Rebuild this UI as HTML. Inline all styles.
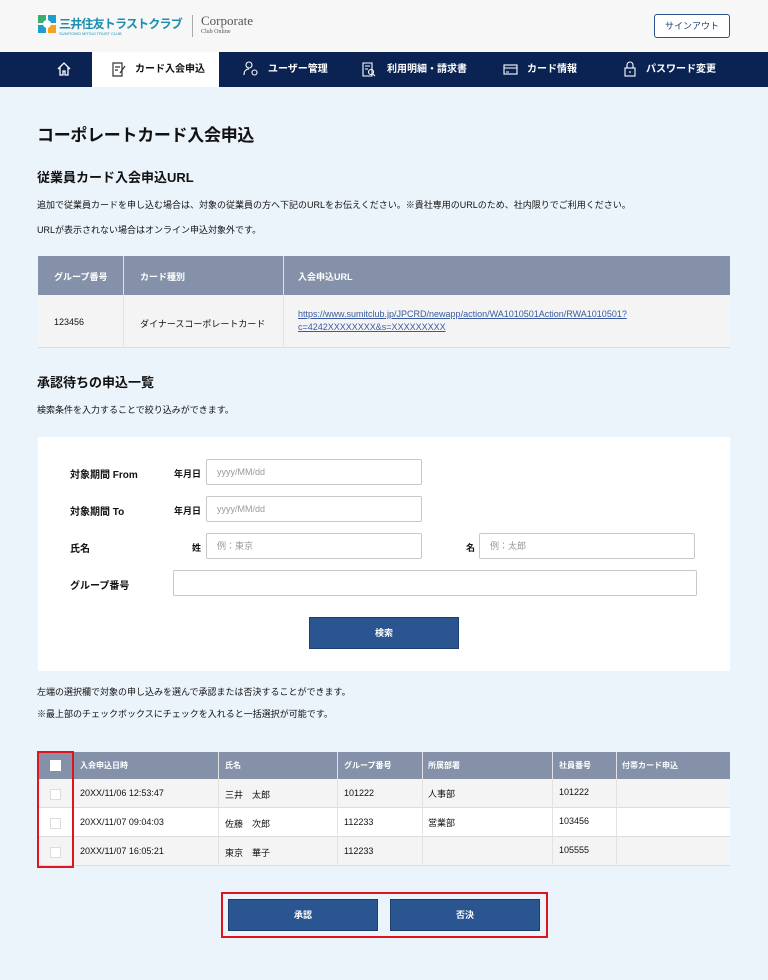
<!DOCTYPE html>
<html><head><meta charset="utf-8"><style>
*{margin:0;padding:0;box-sizing:border-box}
body{width:768px;height:980px;background:#ebf3fb;font-family:"Liberation Sans","Noto Sans CJK JP",sans-serif;color:#111;position:relative;overflow:hidden}
.a{position:absolute}
.hdr{left:0;top:0;width:768px;height:52px;background:#f7f7f7}
.nav{left:0;top:52px;width:768px;height:35px;background:#0b2352}
.nav span{position:absolute;top:0;height:35px;line-height:35px;color:#fff;font-size:10px;font-weight:bold}
.t{font-size:10px;white-space:nowrap}
.b{font-weight:bold}
.cell{position:absolute;font-size:9px;white-space:nowrap}
.inp{position:absolute;background:#fff;border:1px solid #c8c8c8;border-radius:2px;height:26px;font-size:9px;color:#999;padding:0 10px;line-height:24px}
.btn{position:absolute;background:#2b5590;border:1px solid #1d3f70;color:#fff;font-size:9px;font-weight:bold;text-align:center}
.cb{position:absolute;width:11px;height:11px;background:#fff;border:1px solid #ddd;left:50px}
</style></head><body>
<div class="a hdr"></div>
<svg class="a" style="left:38px;top:15px" width="18" height="18" viewBox="0 0 18 18"><rect x="0" y="0" width="8" height="8" fill="#3cae6b"/><rect x="10" y="0" width="8" height="8" fill="#1c9fd0"/><rect x="0" y="10" width="8" height="8" fill="#1c9fd0"/><rect x="10" y="10" width="8" height="8" fill="#f3a31c"/><circle cx="9" cy="9" r="4" fill="#fff"/></svg>
<div class="a b" style="left:59px;top:15px;font-size:12px;color:#1b8fb0;letter-spacing:-0.8px">三井住友トラストクラブ</div>
<div class="a" style="left:59px;top:31px;font-size:4px;color:#1b8fb0">SUMITOMO MITSUI TRUST CLUB</div>
<div class="a" style="left:192px;top:15px;width:1px;height:22px;background:#aaa"></div>
<div class="a" style="left:201px;top:13px;font-family:'Liberation Serif',serif;font-size:13px;color:#555">Corporate</div>
<div class="a" style="left:201px;top:29px;font-family:'Liberation Serif',serif;font-size:6px;color:#555">Club Online</div>
<div class="a" style="left:654px;top:14px;width:76px;height:24px;background:#fff;border:1px solid #2b5590;border-radius:3px;font-size:9px;color:#1d3f70;text-align:center;line-height:22px">サインアウト</div>
<div class="a nav">
<svg class="a" style="left:57px;top:10px" width="14" height="14" viewBox="0 0 14 14" fill="none" stroke="#fff" stroke-width="1.3"><path d="M1 7L7 1l6 6M3 5.5V13h3V9h2v4h3V5.5"/></svg>
<div class="a" style="left:92px;top:0;width:127px;height:35px;background:#fff"></div>
<svg class="a" style="left:112px;top:10px" width="14" height="15" viewBox="0 0 14 15" fill="none" stroke="#333" stroke-width="1.2"><path d="M1 1h9v13H1zM3 5h5M3 8h3M13 4l-5 7"/></svg>
<span style="left:135px;color:#111">カード入会申込</span>
<svg class="a" style="left:243px;top:9px" width="16" height="16" viewBox="0 0 16 16" fill="none" stroke="#fff" stroke-width="1.1"><circle cx="6" cy="4" r="3"/><path d="M1 14c0-4 2-6 5-6"/><circle cx="11.5" cy="11.5" r="2.5"/></svg>
<span style="left:268px">ユーザー管理</span>
<svg class="a" style="left:362px;top:10px" width="14" height="15" viewBox="0 0 14 15" fill="none" stroke="#fff" stroke-width="1.1"><path d="M1 1h9v13H1zM3 4h5M3 7h3"/><circle cx="9" cy="10" r="2.5"/><path d="M11 12l2 2"/></svg>
<span style="left:387px">利用明細・請求書</span>
<svg class="a" style="left:503px;top:12px" width="15" height="11" viewBox="0 0 15 11" fill="none" stroke="#fff" stroke-width="1.1"><rect x="1" y="1" width="13" height="9"/><path d="M1 4h13M3 8h3"/></svg>
<span style="left:527px">カード情報</span>
<svg class="a" style="left:624px;top:9px" width="12" height="16" viewBox="0 0 12 16" fill="none" stroke="#fff" stroke-width="1.1"><path d="M3 7V4a3 3 0 016 0v3"/><rect x="1" y="7" width="10" height="8"/><path d="M6 10v2"/></svg>
<span style="left:646px">パスワード変更</span>
</div>
<div class="a b" style="left:37px;top:121px;font-size:17px;letter-spacing:-0.3px">コーポレートカード入会申込</div>
<div class="a b" style="left:37px;top:167px;font-size:13px">従業員カード入会申込URL</div>
<div class="a t" style="left:37px;top:198px;font-size:9px">追加で従業員カードを申し込む場合は、対象の従業員の方へ下記のURLをお伝えください。※貴社専用のURLのため、社内限りでご利用ください。</div>
<div class="a t" style="left:37px;top:223px;font-size:9px">URLが表示されない場合はオンライン申込対象外です。</div>
<div class="a" style="left:38px;top:256px;width:692px;height:39px;background:#8591a8"></div>
<div class="a" style="left:38px;top:295px;width:692px;height:53px;background:#f4f4f4;border-bottom:1px solid #ddd"></div>
<div class="a" style="left:123px;top:256px;width:1px;height:92px;background:#e2e2e2"></div>
<div class="a" style="left:283px;top:256px;width:1px;height:92px;background:#e2e2e2"></div>
<div class="cell b" style="left:54px;top:270px;color:#fff">グループ番号</div>
<div class="cell b" style="left:140px;top:270px;color:#fff">カード種別</div>
<div class="cell b" style="left:298px;top:270px;color:#fff">入会申込URL</div>
<div class="cell" style="left:54px;top:317px">123456</div>
<div class="cell" style="left:140px;top:317px">ダイナースコーポレートカード</div>
<div class="cell" style="left:298px;top:308px;color:#3a5aa0;text-decoration:underline;line-height:13px">https://www.sumitclub.jp/JPCRD/newapp/action/WA1010501Action/RWA1010501?<br>c=4242XXXXXXXX&amp;s=XXXXXXXXX</div>
<div class="a b" style="left:37px;top:372px;font-size:13px">承認待ちの申込一覧</div>
<div class="a t" style="left:37px;top:403px;font-size:9px">検索条件を入力することで絞り込みができます。</div>
<div class="a" style="left:38px;top:437px;width:692px;height:234px;background:#fff"></div>
<div class="cell b" style="left:70px;top:466px;font-size:10px">対象期間 From</div>
<div class="cell b" style="left:174px;top:467px">年月日</div>
<div class="inp" style="left:206px;top:459px;width:216px">yyyy/MM/dd</div>
<div class="cell b" style="left:70px;top:503px;font-size:10px">対象期間 To</div>
<div class="cell b" style="left:174px;top:504px">年月日</div>
<div class="inp" style="left:206px;top:496px;width:216px">yyyy/MM/dd</div>
<div class="cell b" style="left:70px;top:540px;font-size:10px">氏名</div>
<div class="cell b" style="left:192px;top:541px">姓</div>
<div class="inp" style="left:206px;top:533px;width:216px">例：東京</div>
<div class="cell b" style="left:466px;top:541px">名</div>
<div class="inp" style="left:479px;top:533px;width:216px">例：太郎</div>
<div class="cell b" style="left:70px;top:577px;font-size:10px">グループ番号</div>
<div class="inp" style="left:173px;top:570px;width:524px"></div>
<div class="btn" style="left:309px;top:617px;width:150px;height:32px;line-height:30px">検索</div>
<div class="a t" style="left:37px;top:685px;font-size:9px">左端の選択欄で対象の申し込みを選んで承認または否決することができます。</div>
<div class="a t" style="left:37px;top:707px;font-size:9px">※最上部のチェックボックスにチェックを入れると一括選択が可能です。</div>
<div class="a" style="left:38px;top:752px;width:692px;height:27px;background:#8591a8"></div>
<div class="a" style="left:38px;top:779px;width:692px;height:29px;background:#f4f4f4;border-bottom:1px solid #ddd"></div>
<div class="a" style="left:38px;top:808px;width:692px;height:29px;background:#fff;border-bottom:1px solid #ddd"></div>
<div class="a" style="left:38px;top:837px;width:692px;height:29px;background:#f4f4f4;border-bottom:1px solid #ddd"></div>
<div class="a" style="left:218px;top:752px;width:1px;height:114px;background:#e2e2e2"></div>
<div class="a" style="left:337px;top:752px;width:1px;height:114px;background:#e2e2e2"></div>
<div class="a" style="left:422px;top:752px;width:1px;height:114px;background:#e2e2e2"></div>
<div class="a" style="left:552px;top:752px;width:1px;height:114px;background:#e2e2e2"></div>
<div class="a" style="left:616px;top:752px;width:1px;height:114px;background:#e2e2e2"></div>
<div class="a" style="left:73px;top:752px;width:1px;height:114px;background:#e2e2e2"></div>
<div class="cb" style="top:760px;border-color:#fff"></div>
<div class="cb" style="top:789px"></div><div class="cb" style="top:818px"></div><div class="cb" style="top:847px"></div>
<div class="cell b" style="left:80px;top:760px;color:#fff;font-size:8px">入会申込日時</div>
<div class="cell b" style="left:225px;top:760px;color:#fff;font-size:8px">氏名</div>
<div class="cell b" style="left:344px;top:760px;color:#fff;font-size:8px">グループ番号</div>
<div class="cell b" style="left:428px;top:760px;color:#fff;font-size:8px">所属部署</div>
<div class="cell b" style="left:559px;top:760px;color:#fff;font-size:8px">社員番号</div>
<div class="cell b" style="left:622px;top:760px;color:#fff;font-size:8px">付帯カード申込</div>
<div class="cell" style="left:80px;top:788px">20XX/11/06 12:53:47</div><div class="cell" style="left:225px;top:788px">三井　太郎</div><div class="cell" style="left:344px;top:788px">101222</div><div class="cell" style="left:428px;top:787px">人事部</div><div class="cell" style="left:559px;top:787px">101222</div>
<div class="cell" style="left:80px;top:817px">20XX/11/07 09:04:03</div><div class="cell" style="left:225px;top:817px">佐藤　次郎</div><div class="cell" style="left:344px;top:817px">112233</div><div class="cell" style="left:428px;top:816px">営業部</div><div class="cell" style="left:559px;top:816px">103456</div>
<div class="cell" style="left:80px;top:846px">20XX/11/07 16:05:21</div><div class="cell" style="left:225px;top:846px">東京　華子</div><div class="cell" style="left:344px;top:846px">112233</div><div class="cell" style="left:559px;top:845px">105555</div>
<div class="a" style="left:37px;top:751px;width:37px;height:117px;border:2px solid #e0141e"></div>
<div class="a" style="left:221px;top:892px;width:327px;height:46px;border:2px solid #e0141e"></div>
<div class="btn" style="left:228px;top:899px;width:150px;height:32px;line-height:30px">承認</div>
<div class="btn" style="left:390px;top:899px;width:150px;height:32px;line-height:30px">否決</div>
</body></html>
